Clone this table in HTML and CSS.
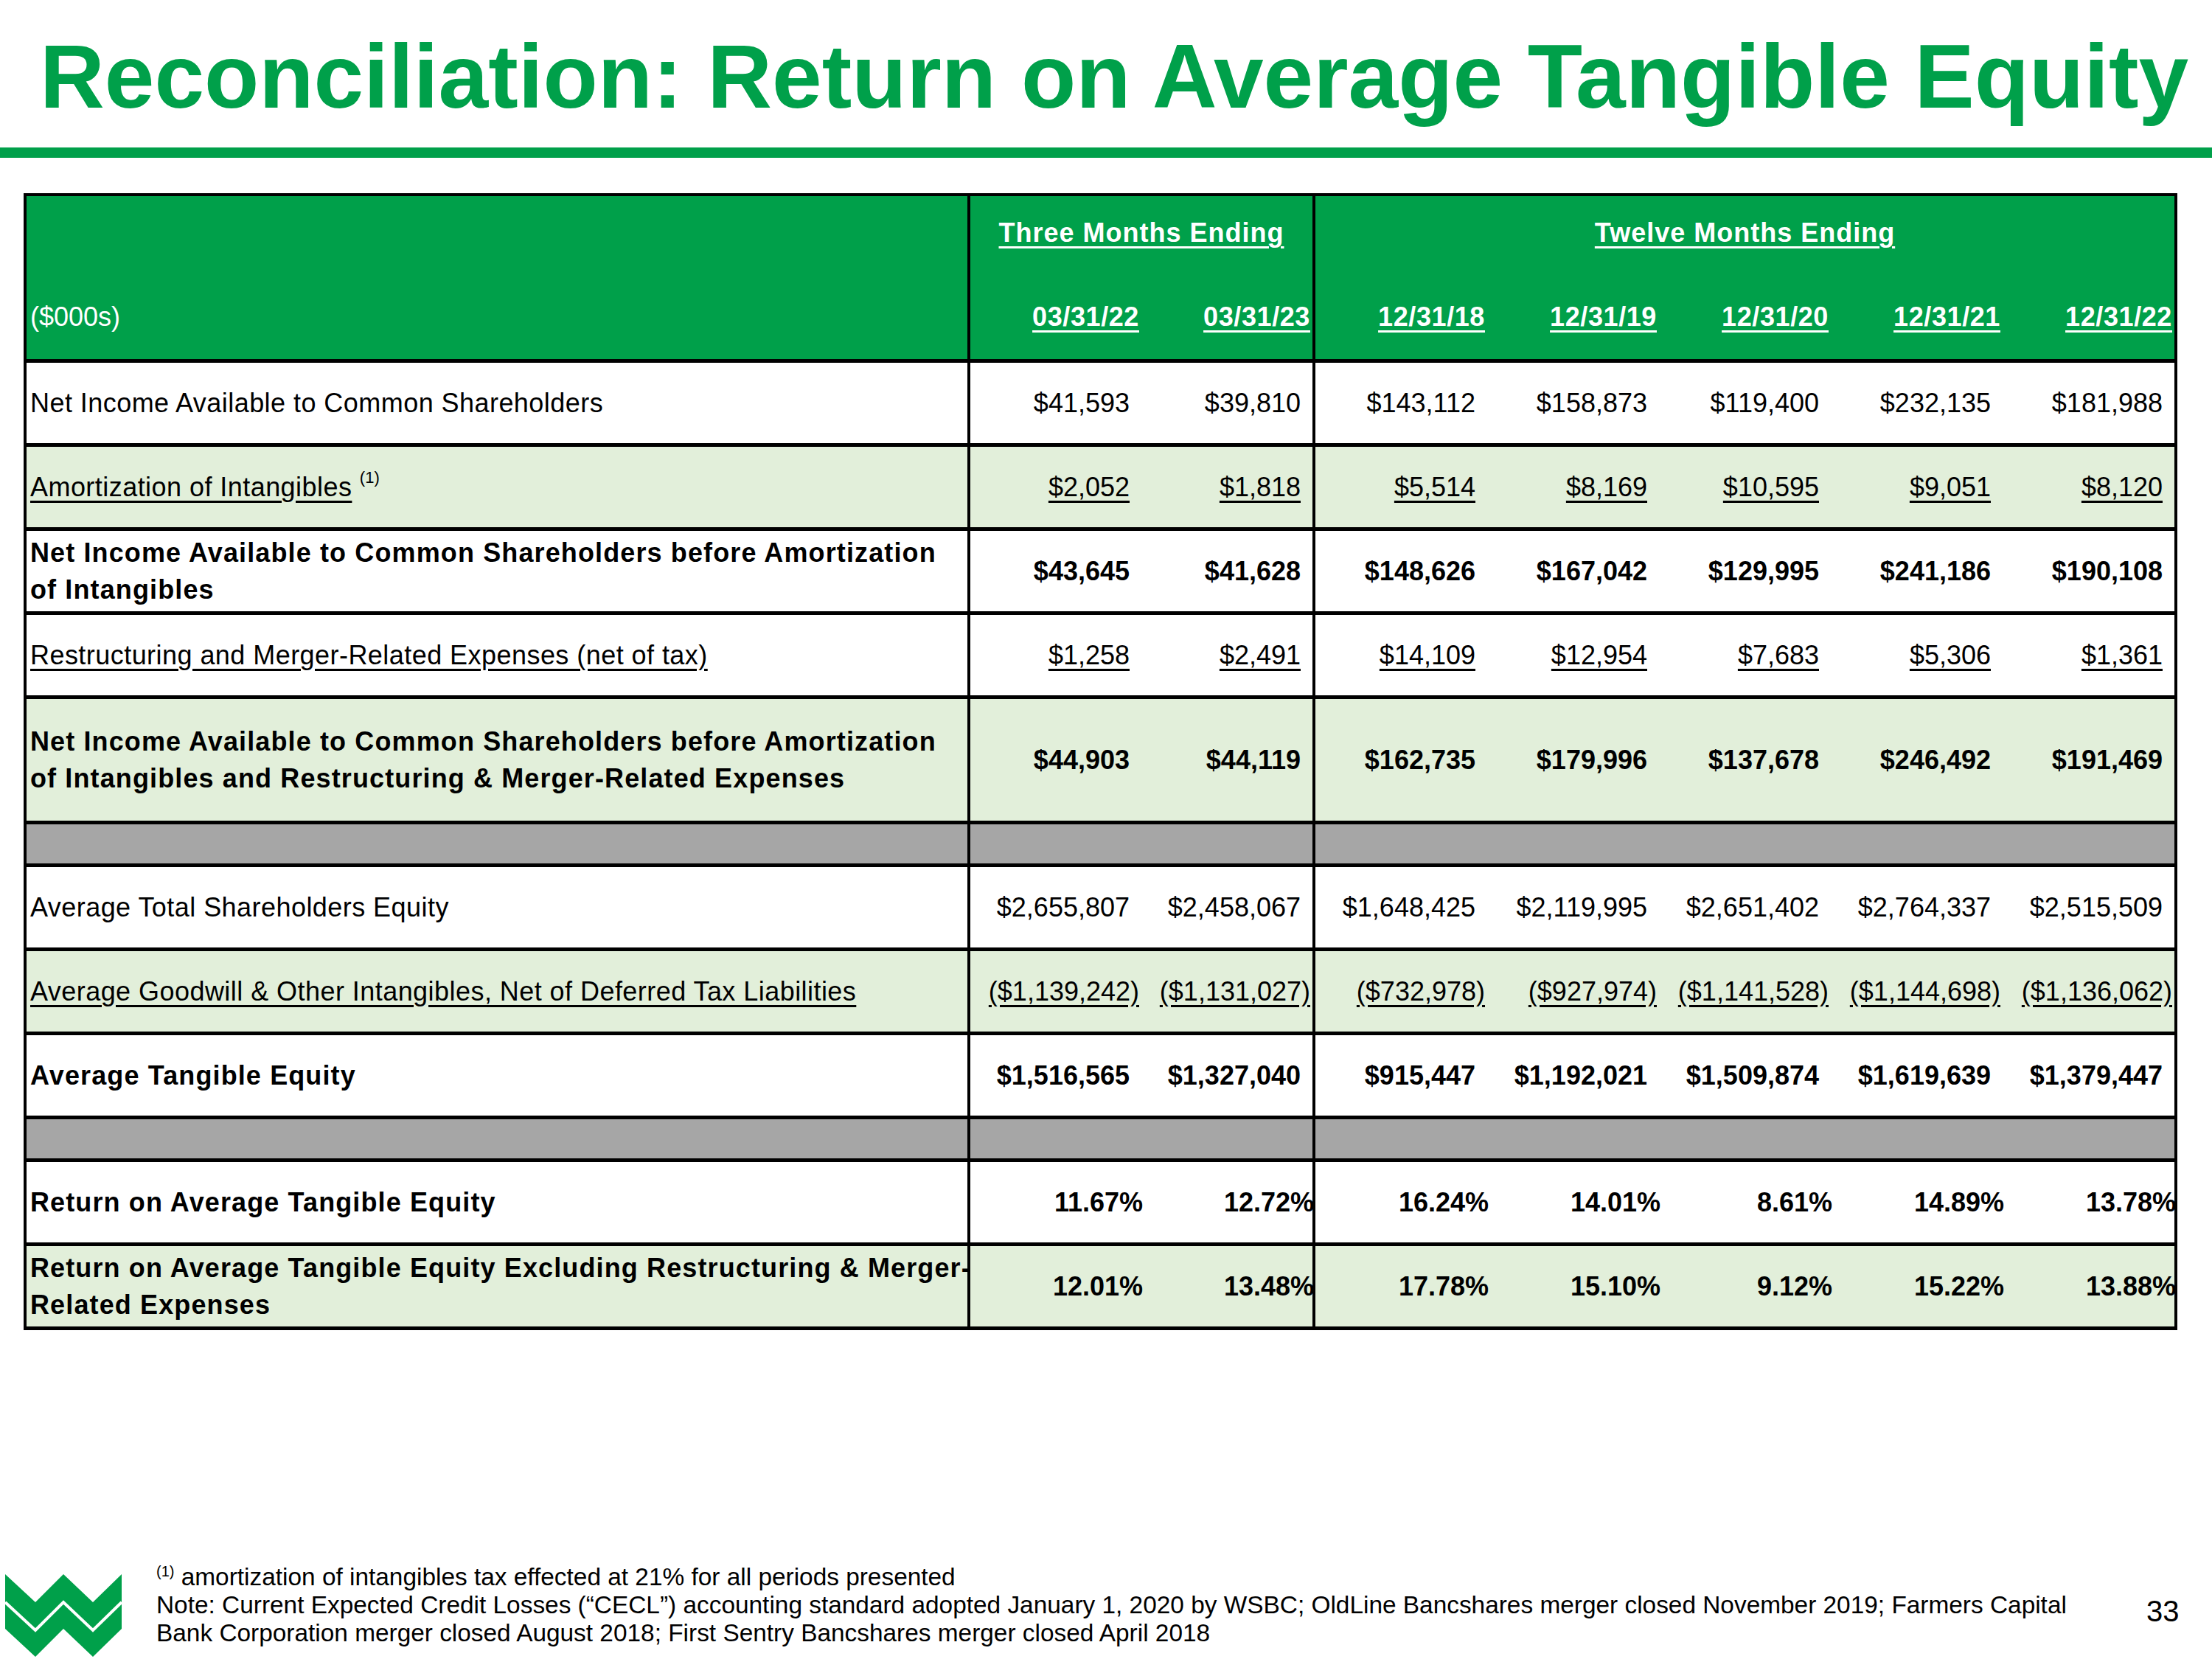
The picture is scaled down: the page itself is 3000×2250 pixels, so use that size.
FILE: index.html
```html
<!DOCTYPE html>
<html lang="en">
<head>
<meta charset="utf-8">
<title>Reconciliation: Return on Average Tangible Equity</title>
<link rel="stylesheet" href="styles.css">
</head>
<body>
<div class="slide">
  <h1 class="title">Reconciliation: Return on Average Tangible Equity</h1>
  <div class="rule"></div>

  <div class="table">
    <div class="head">
      <div class="hl">($000s)</div>
      <div class="hg hg3"><span class="u">Three Months Ending</span></div>
      <div class="hg hg12"><span class="u">Twelve Months Ending</span></div>
      <div class="hd"><span class="u">03/31/22</span></div>
      <div class="hd sec"><span class="u">03/31/23</span></div>
      <div class="hd"><span class="u">12/31/18</span></div>
      <div class="hd"><span class="u">12/31/19</span></div>
      <div class="hd"><span class="u">12/31/20</span></div>
      <div class="hd"><span class="u">12/31/21</span></div>
      <div class="hd"><span class="u">12/31/22</span></div>
    </div>

    <div class="row">
      <div class="lbl"><div class="t">Net Income Available to Common Shareholders</div></div>
      <div class="v"><span>$41,593</span></div>
      <div class="v sec"><span>$39,810</span></div>
      <div class="v"><span>$143,112</span></div>
      <div class="v"><span>$158,873</span></div>
      <div class="v"><span>$119,400</span></div>
      <div class="v"><span>$232,135</span></div>
      <div class="v"><span>$181,988</span></div>
    </div>

    <div class="row lg">
      <div class="lbl"><div class="t"><span class="u">Amortization of Intangibles</span> <sup>(1)</sup></div></div>
      <div class="v"><span class="u">$2,052</span></div>
      <div class="v sec"><span class="u">$1,818</span></div>
      <div class="v"><span class="u">$5,514</span></div>
      <div class="v"><span class="u">$8,169</span></div>
      <div class="v"><span class="u">$10,595</span></div>
      <div class="v"><span class="u">$9,051</span></div>
      <div class="v"><span class="u">$8,120</span></div>
    </div>

    <div class="row b">
      <div class="lbl"><div class="t">Net Income Available to Common Shareholders before Amortization<br>of Intangibles</div></div>
      <div class="v"><span>$43,645</span></div>
      <div class="v sec"><span>$41,628</span></div>
      <div class="v"><span>$148,626</span></div>
      <div class="v"><span>$167,042</span></div>
      <div class="v"><span>$129,995</span></div>
      <div class="v"><span>$241,186</span></div>
      <div class="v"><span>$190,108</span></div>
    </div>

    <div class="row">
      <div class="lbl"><div class="t"><span class="u">Restructuring and Merger-Related Expenses (net of tax)</span></div></div>
      <div class="v"><span class="u">$1,258</span></div>
      <div class="v sec"><span class="u">$2,491</span></div>
      <div class="v"><span class="u">$14,109</span></div>
      <div class="v"><span class="u">$12,954</span></div>
      <div class="v"><span class="u">$7,683</span></div>
      <div class="v"><span class="u">$5,306</span></div>
      <div class="v"><span class="u">$1,361</span></div>
    </div>

    <div class="row lg b tall">
      <div class="lbl"><div class="t">Net Income Available to Common Shareholders before Amortization<br>of Intangibles and Restructuring &amp; Merger-Related Expenses</div></div>
      <div class="v"><span>$44,903</span></div>
      <div class="v sec"><span>$44,119</span></div>
      <div class="v"><span>$162,735</span></div>
      <div class="v"><span>$179,996</span></div>
      <div class="v"><span>$137,678</span></div>
      <div class="v"><span>$246,492</span></div>
      <div class="v"><span>$191,469</span></div>
    </div>

    <div class="row gray">
      <div class="lbl"></div>
      <div class="v"></div>
      <div class="v sec"></div>
      <div class="v"></div>
      <div class="v"></div>
      <div class="v"></div>
      <div class="v"></div>
      <div class="v"></div>
    </div>

    <div class="row">
      <div class="lbl"><div class="t">Average Total Shareholders Equity</div></div>
      <div class="v"><span>$2,655,807</span></div>
      <div class="v sec"><span>$2,458,067</span></div>
      <div class="v"><span>$1,648,425</span></div>
      <div class="v"><span>$2,119,995</span></div>
      <div class="v"><span>$2,651,402</span></div>
      <div class="v"><span>$2,764,337</span></div>
      <div class="v"><span>$2,515,509</span></div>
    </div>

    <div class="row lg">
      <div class="lbl"><div class="t"><span class="u">Average Goodwill &amp; Other Intangibles, Net of Deferred Tax Liabilities</span></div></div>
      <div class="v n"><span class="u">($1,139,242)</span></div>
      <div class="v n sec"><span class="u">($1,131,027)</span></div>
      <div class="v n"><span class="u">($732,978)</span></div>
      <div class="v n"><span class="u">($927,974)</span></div>
      <div class="v n"><span class="u">($1,141,528)</span></div>
      <div class="v n"><span class="u">($1,144,698)</span></div>
      <div class="v n"><span class="u">($1,136,062)</span></div>
    </div>

    <div class="row b">
      <div class="lbl"><div class="t">Average Tangible Equity</div></div>
      <div class="v"><span>$1,516,565</span></div>
      <div class="v sec"><span>$1,327,040</span></div>
      <div class="v"><span>$915,447</span></div>
      <div class="v"><span>$1,192,021</span></div>
      <div class="v"><span>$1,509,874</span></div>
      <div class="v"><span>$1,619,639</span></div>
      <div class="v"><span>$1,379,447</span></div>
    </div>

    <div class="row gray">
      <div class="lbl"></div>
      <div class="v"></div>
      <div class="v sec"></div>
      <div class="v"></div>
      <div class="v"></div>
      <div class="v"></div>
      <div class="v"></div>
      <div class="v"></div>
    </div>

    <div class="row b">
      <div class="lbl"><div class="t">Return on Average Tangible Equity</div></div>
      <div class="v p"><span>11.67%</span></div>
      <div class="v p sec"><span>12.72%</span></div>
      <div class="v p"><span>16.24%</span></div>
      <div class="v p"><span>14.01%</span></div>
      <div class="v p"><span>8.61%</span></div>
      <div class="v p"><span>14.89%</span></div>
      <div class="v p"><span>13.78%</span></div>
    </div>

    <div class="row lg b">
      <div class="lbl"><div class="t">Return on Average Tangible Equity Excluding Restructuring &amp; Merger-<br>Related Expenses</div></div>
      <div class="v p"><span>12.01%</span></div>
      <div class="v p sec"><span>13.48%</span></div>
      <div class="v p"><span>17.78%</span></div>
      <div class="v p"><span>15.10%</span></div>
      <div class="v p"><span>9.12%</span></div>
      <div class="v p"><span>15.22%</span></div>
      <div class="v p"><span>13.88%</span></div>
    </div>
  </div>

  <div class="foot">
    <svg class="logo" viewBox="0 0 158 112" aria-label="WesBanco logo">
      <polygon points="0,0 41,38 79,0 119,38 158,0 158,74 119,112 79,74 41,112 0,74" fill="#00A04A"/>
      <polyline points="0,38 41,76 79,38 119,76 158,38" fill="none" stroke="#fff" stroke-width="4"/>
    </svg>
    <div class="notes">
      <div><sup>(1)</sup> amortization of intangibles tax effected at 21% for all periods presented</div>
      <div>Note: Current Expected Credit Losses (“CECL”) accounting standard adopted January 1, 2020 by WSBC; OldLine Bancshares merger closed November 2019; Farmers Capital</div>
      <div>Bank Corporation merger closed August 2018; First Sentry Bancshares merger closed April 2018</div>
    </div>
    <div class="pnum">33</div>
  </div>
</div>
</body>
</html>
```

FILE: styles.css
```css
* { box-sizing: border-box; }

html, body {
  margin: 0;
  padding: 0;
}

body {
  width: 3000px;
  height: 2250px;
  overflow: hidden;
  background: #ffffff;
  color: #000000;
  font-family: "Liberation Sans", Arial, sans-serif;
}

.slide {
  display: flex;
  flex-direction: column;
  height: 2250px;
}

.title {
  margin: 44px 0 0 0;
  padding-left: 54px;
  font-size: 121.6px;
  line-height: 121px;
  font-weight: bold;
  color: #00A04A;
  white-space: nowrap;
}

.rule {
  height: 14px;
  margin-top: 35px;
  background: #00A04A;
}

/* ---------- table ---------- */
.table {
  margin: 48px 0 0 32px;
  width: 2921px;
  border: 4px solid #000;
  border-bottom: 0;
  font-size: 36px;
}

.head,
.row {
  display: grid;
  grid-template-columns: 1280px 232px 236px repeat(5, 233px);
  border-bottom: 5px solid #000;
}

.head {
  height: 226px;
  grid-template-rows: 100px 121px;
  background: #00A04A;
  color: #ffffff;
  font-weight: bold;
}

.hl {
  grid-column: 1;
  grid-row: 1 / 3;
  display: flex;
  align-items: flex-end;
  padding: 0 0 35px 5px;
  line-height: 44px;
  font-weight: normal;
  border-right: 4px solid #000;
}

.hg {
  grid-row: 1;
  padding-top: 28px;
  line-height: 44px;
  text-align: center;
  letter-spacing: 1px;
}

.hg3 {
  grid-column: 2 / 4;
  border-right: 4px solid #000;
}

.hg12 {
  grid-column: 4 / 9;
}

.hd {
  grid-row: 2;
  display: flex;
  justify-content: flex-end;
  align-items: flex-end;
  padding: 0 3px 35px 0;
  line-height: 44px;
  letter-spacing: 0.6px;
}

.row {
  height: 114px;
  background: #ffffff;
}

.row.tall { height: 170px; }
.row.gray { height: 58px; background: #A6A6A6; }
.row.lg { background: #E2EFDA; }
.row.b { font-weight: bold; }

.lbl {
  display: flex;
  align-items: center;
  padding-left: 5px;
  border-right: 4px solid #000;
  line-height: 50px;
  white-space: nowrap;
  letter-spacing: 0.45px;
}

.row.b .lbl { letter-spacing: 1.12px; }

.lbl sup {
  font-size: 22px;
  line-height: 0;
  vertical-align: 18px;
  font-weight: normal;
  letter-spacing: 0;
}

.v {
  display: flex;
  align-items: center;
  justify-content: flex-end;
  padding-right: 16px;
  white-space: nowrap;
}

.v.n { padding-right: 3px; }
.v.p { padding-right: 0; }
.v.p span { margin-right: -2px; }

.sec { border-right: 4px solid #000; }

.u {
  text-decoration: underline;
  text-decoration-thickness: 3px;
  text-underline-offset: 6px;
}

/* ---------- footer ---------- */
.foot {
  margin-top: auto;
  height: 130px;
  display: flex;
  padding-left: 7px;
}

.logo {
  flex: none;
  width: 158px;
  height: 112px;
  margin-top: 15px;
}

.notes {
  flex: none;
  width: 2699px;
  margin-left: 47px;
  font-size: 33.4px;
  line-height: 38px;
  white-space: nowrap;
}

.notes sup {
  font-size: 20px;
  line-height: 0;
  vertical-align: 12px;
}

.pnum {
  font-size: 40px;
  line-height: 40px;
  margin-top: 45px;
}
```
